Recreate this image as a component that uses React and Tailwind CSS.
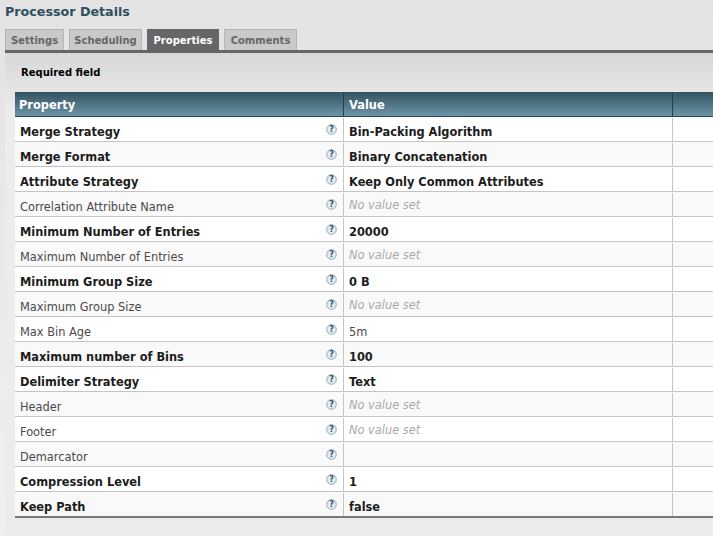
const rows = [
  ['Merge Strategy', 'Bin-Packing Algorithm', true],
  ['Merge Format', 'Binary Concatenation', true],
  ['Attribute Strategy', 'Keep Only Common Attributes', true],
  ['Correlation Attribute Name', null, false],
  ['Minimum Number of Entries', '20000', true],
  ['Maximum Number of Entries', null, false],
  ['Minimum Group Size', '0 B', true],
  ['Maximum Group Size', null, false],
  ['Max Bin Age', '5m', false],
  ['Maximum number of Bins', '100', true],
  ['Delimiter Strategy', 'Text', true],
  ['Header', null, false],
  ['Footer', null, false],
  ['Demarcator', '', false],
  ['Compression Level', '1', true],
  ['Keep Path', 'false', true],
];

const tabs = [
  { name: 'Settings', width: 'w-[59px]' },
  { name: 'Scheduling', width: 'w-[73px]' },
  { name: 'Properties', width: 'w-[72px]' },
  { name: 'Comments', width: 'w-[73px]' },
];

function HelpIcon() {
  return (
    <svg width="11" height="11" viewBox="0 0 11 11" className="mt-[6px] shrink-0">
      <circle cx="5.5" cy="5.5" r="4.8" fill="#e4edf1" stroke="#8fa9b6" />
      <text x="5.5" y="8.2" textAnchor="middle" fontSize="8" fontWeight="700" fill="#33515f" fontFamily="'DejaVu Sans', sans-serif">?</text>
    </svg>
  );
}

export default function App() {
  return (
    <div className="w-[713px] h-[536px] overflow-hidden flex flex-col bg-gradient-to-b from-[#e3e3e3] to-[#f0f0f0] font-['DejaVu_Sans',sans-serif]">
      {/* Title */}
      <h1 className="h-[29px] pl-[5px] pt-[3px] text-[12.7px] leading-[18px] font-bold text-[#2f4f5f]">Processor Details</h1>

      {/* Tabs */}
      <div className="flex gap-[5px] pl-[5px] h-[21px]">
        {tabs.map((t) =>
          t.name === 'Properties' ? (
            <div key={t.name} className={`${t.width} h-[21px] pt-[1px] flex items-center justify-center bg-[#666666] text-white text-[10px] font-bold`}>{t.name}</div>
          ) : (
            <div key={t.name} className={`${t.width} h-[21px] flex items-center justify-center bg-[#c9c9c9] border border-b-0 border-[#b5b5b5] text-[#666666] text-[10px] font-bold`}>{t.name}</div>
          )
        )}
      </div>
      <div className="h-[3px] ml-[5px] bg-[#666666]" />

      {/* Panel */}
      <div className="flex-1 ml-[5px] pl-[10px] bg-gradient-to-b from-[#d8d8d8] via-[#ececec] via-[12%] to-[#ececec]">
        <div className="h-[39px] pl-[6px] pt-[13px] text-[10px] leading-[14px] font-bold text-black">Required field</div>
        <div className="flex h-[25px] bg-gradient-to-b from-[#35525f] to-[#6b96a8] border-b border-[#2c4653] text-white text-[11.4px] font-bold leading-[26px]">
          <div className="w-[329px] shrink-0 pl-[4px] border-r border-[#24404d]">Property</div>
          <div className="w-[329px] shrink-0 pl-[5px] border-r border-[#24404d]">Value</div>
        </div>
        {rows.map(([name, value, bold], i) => (
          <div key={name} className={`flex h-[25px] border-b border-[#c4c4c4] text-[11.4px] leading-[29px] ${i % 2 ? 'bg-[#f9f9f9]' : 'bg-white'}`}>
            <div className={`w-[329px] shrink-0 mt-[1px] pl-[5px] pr-[6px] flex justify-between border-r border-[#c4c4c4] ${bold ? 'font-bold text-[#1c1c1c]' : 'text-[#4a4a4a]'}`}>
              <span>{name}</span>
              <HelpIcon />
            </div>
            <div className={`w-[329px] shrink-0 mt-[1px] pl-[5px] border-r border-[#c4c4c4] ${value === null ? 'italic text-[#aaaaaa]' : bold ? 'font-bold text-[#1c1c1c]' : 'text-[#4a4a4a]'}`}>
              <div className={value === null ? 'mt-[-2px]' : ''}>{value === null ? 'No value set' : value}</div>
            </div>
          </div>
        ))}
        <div className="h-[2px] mt-[-1px] bg-[#777777]" />
      </div>
    </div>
  );
}
